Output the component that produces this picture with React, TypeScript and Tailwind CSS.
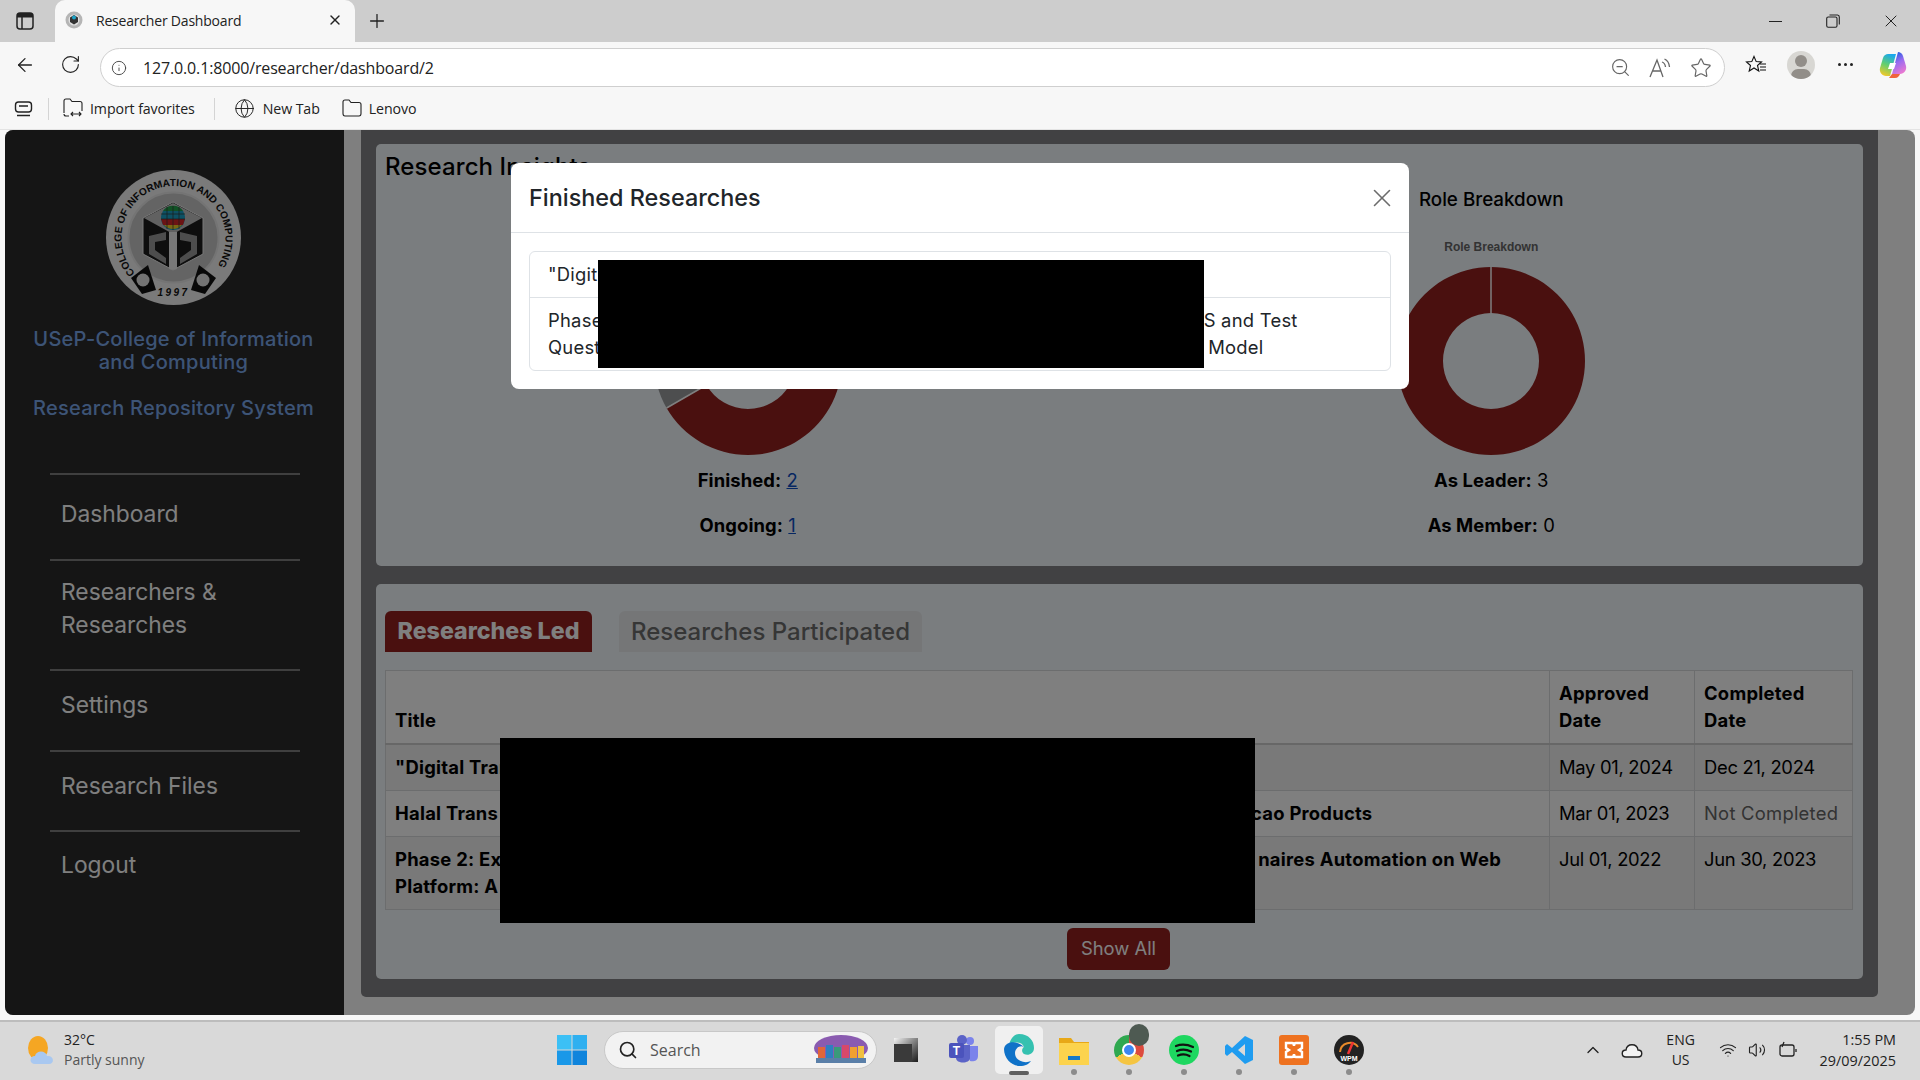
import React from "react";
import { ArrowLeft, ChevronUp, Globe, Info, Plus, RotateCw, Search, Star, Volume2, Wifi, X, ZoomOut } from "lucide-react";

const navItems = [
    { label: "Dashboard", box: "h-[86px] pb-[8px]" },
    { label: "Researchers & Researches", box: "h-[110px] pb-[14px]" },
    { label: "Settings", box: "h-[81px] pb-[12px]" },
    { label: "Research Files", box: "h-[80px] pb-[12px]" },
    { label: "Logout", box: "h-[66px]" },
];

const Seal = () => (
    <svg viewBox="0 0 135 135" className="w-[135px] h-[135px]">
        <defs>
            <path id="ring-top" d="M 29 103 A 52 52 0 1 1 106 103" />
        </defs>
        <circle cx="67.5" cy="67.5" r="67.5" fill="#f4f4f4" />
        <circle cx="67.5" cy="67.5" r="45" fill="#c9c9c9" stroke="#e8e8e8" strokeWidth="2" />
        <text fontSize="10.2" fontWeight="700" fill="#111" fontFamily="Liberation Sans, sans-serif">
            <textPath href="#ring-top" startOffset="0">COLLEGE OF INFORMATION AND COMPUTING</textPath>
        </text>
        <path d="M 25 108 L 42 95 L 50 120 L 36 124 Z" fill="#111" />
        <path d="M 110 108 L 93 95 L 85 120 L 99 124 Z" fill="#111" />
        <circle cx="37" cy="110" r="6.5" fill="#e6e6e6" />
        <circle cx="97" cy="110" r="6.5" fill="#e6e6e6" />
        <text x="67.5" y="126" textAnchor="middle" fontSize="10" fontWeight="700" fontStyle="italic" letterSpacing="2.5" fill="#111" fontFamily="Liberation Sans, sans-serif">1997</text>
        <path d="M 67 32 L 97 48 L 97 84 L 67 100 L 37 84 L 37 48 Z" fill="#1c1c1c" stroke="#f0f0f0" strokeWidth="1" />
        <path d="M 67 33 L 96 48 L 67 64 L 38 48 Z" fill="#c2c2c2" />
        <path d="M 43 66 L 60 62 L 60 70 L 49 72 L 49 80 L 60 88 L 60 94 L 43 84 Z" fill="#9b9b9b" />
        <path d="M 91 66 L 74 62 L 74 70 L 85 72 L 85 80 L 74 88 L 74 94 L 91 84 Z" fill="#9b9b9b" />
        <path d="M 63 62 L 71 62 L 71 99 L 67 100 L 63 99 Z" fill="#f0f0f0" />
        <circle cx="67" cy="48" r="12" fill="#1aa3c8" />
        <path d="M 57 41 A 12 12 0 0 1 77 41 Z" fill="#23a34a" />
        <path d="M 55 49 L 79 49 L 77 55 L 57 55 Z" fill="#d62828" />
        <path d="M 58 55 L 76 55 A 12 12 0 0 1 58 55 Z" fill="#f2d027" />
        <path d="M 55 44 H 79 M 55 49 H 79 M 67 36 V 60 M 61 37 V 59 M 73 37 V 59" stroke="#333" strokeWidth="0.7" />
    </svg>
);

const Sidebar = () => (
    <aside className="w-[339px] shrink-0 bg-[#2a2a2a] flex flex-col">
        <div className="pt-[40px] flex flex-col items-center">
            <div className="ml-[-2px]"><Seal /></div>
            <p className="mt-[23px] w-[300px] ml-[-2px] text-center text-[20px] leading-[23px] font-medium tracking-[0.25px] text-[#7aa8ec]">
                USeP-College of Information and Computing
            </p>
            <p className="mt-[23px] ml-[-2px] text-center text-[20px] leading-[23px] font-medium tracking-[0.25px] text-[#7aa8ec]">
                Research Repository System
            </p>
        </div>
        <nav className="mt-[53px] ml-[45px] w-[250px]">
            {navItems.map((item) => (
                <div
                    key={item.label}
                    className={`${item.box} border-t-2 border-[#7e7e7e] pl-[11px] pr-[20px] flex items-center text-[22.8px] leading-[33px] text-white`}
                >
                    {item.label}
                </div>
            ))}
        </nav>
    </aside>
);

// chart.js style donut: first arc from twelve o'clock, clockwise
const Donut = ({ split }: { split: number }) => {
    const R = 94;
    const r = 48;
    const a = (split / 360) * 2 * Math.PI;
    const x = (rad: number) => 100 + rad * Math.sin(a);
    const y = (rad: number) => 100 - rad * Math.cos(a);
    const large = split > 180 ? 1 : 0;
    return (
        <svg viewBox="0 0 200 200" className="w-[200px] h-[200px]">
            {split >= 360 ? (
                <>
                    <path
                        fillRule="evenodd"
                        d={`M 100 6 A ${R} ${R} 0 1 1 99.99 6 Z M 100 52 A ${r} ${r} 0 1 0 100.01 52 Z`}
                        fill="#94201e"
                    />
                    <line x1="100" y1="6" x2="100" y2="52" stroke="#fff" strokeWidth="1.5" />
                </>
            ) : (
                <>
                    <path
                        d={`M 100 6 A ${R} ${R} 0 ${large} 1 ${x(R)} ${y(R)} L ${x(r)} ${y(r)} A ${r} ${r} 0 ${large} 0 100 52 Z`}
                        fill="#94201e"
                    />
                    <path
                        d={`M ${x(R)} ${y(R)} A ${R} ${R} 0 ${1 - large} 1 100 6 L 100 52 A ${r} ${r} 0 ${1 - large} 0 ${x(r)} ${y(r)} Z`}
                        fill="#9a9c9e"
                    />
                    <line x1={x(R)} y1={y(R)} x2={x(r)} y2={y(r)} stroke="#fff" strokeWidth="1.5" />
                    <line x1="100" y1="6" x2="100" y2="52" stroke="#fff" strokeWidth="1.5" />
                </>
            )}
        </svg>
    );
};

const ChartBlock = ({ title, split, children }: { title: string; split: number; children: React.ReactNode }) => (
    <div className="flex-1 flex flex-col items-center">
        <h3 className="h-[30px] text-[18.8px] leading-[30px] font-medium text-black">{title}</h3>
        <div className="mt-[23px] h-[18px] text-[12px] leading-[18px] font-bold text-[#666] font-['Liberation_Sans',sans-serif]">{title}</div>
        <div className="mt-[5px]"><Donut split={split} /></div>
        <div className="mt-[6px] flex flex-col items-center gap-[18px] text-[18.4px] leading-[27px] tracking-[0.1px] text-black">{children}</div>
    </div>
);

const Insights = () => (
    <section className="h-[422px] bg-[#f4fafe] rounded-[5px] pt-[5px]">
        <h2 className="pl-[9px] text-[24px] leading-[36px] font-medium tracking-[0.1px] text-black">Research Insights</h2>
        <div className="flex">
            <ChartBlock title="" split={240}>
                <p><b className="font-bold">Finished:</b> <a className="underline text-[#0d4fc4]">2</a></p>
                <p><b className="font-bold">Ongoing:</b> <a className="underline text-[#0d4fc4]">1</a></p>
            </ChartBlock>
            <ChartBlock title="Role Breakdown" split={360}>
                <p><b className="font-bold">As Leader:</b> 3</p>
                <p><b className="font-bold">As Member:</b> 0</p>
            </ChartBlock>
        </div>
    </section>
);

const TableCard = () => (
    <section className="mt-[18px] h-[395px] bg-[#f4fafe] rounded-[5px] pt-[27px] px-[9px]">
        <div className="flex gap-[27px] h-[41px]">
            <div className="w-[207px] bg-[#94201e] rounded-t-[6px] flex items-center justify-center text-[23.2px] font-extrabold text-white">Researches Led</div>
            <div className="w-[303px] bg-[#eaecef] rounded-t-[6px] flex items-center justify-center text-[24px] font-medium text-[#6c6c6c]">Researches Participated</div>
        </div>
        <table className="mt-[18px] w-[1467px] table-fixed border-collapse text-[18.4px] leading-[27px] tracking-[0.25px] text-black">
            <colgroup>
                <col className="w-[1164px]" />
                <col className="w-[145px]" />
                <col className="w-[158px]" />
            </colgroup>
            <thead>
                <tr className="bg-white">
                    <th className="h-[73px] px-[9px] pb-[9px] border border-[#d8dadd] border-b-[2px] border-b-[#cfcfcf] text-left font-bold align-bottom">Title</th>
                    <th className="px-[9px] pb-[9px] border border-[#d8dadd] border-b-[2px] border-b-[#cfcfcf] text-left font-bold align-bottom">Approved Date</th>
                    <th className="px-[9px] pb-[9px] border border-[#d8dadd] border-b-[2px] border-b-[#cfcfcf] text-left font-bold align-bottom">Completed Date</th>
                </tr>
            </thead>
            <tbody>
                <tr className="bg-[#f2f2f2]">
                    <td className="h-[47px] px-[9px] border border-[#d8dadd] font-bold">"Digital Tran</td>
                    <td className="px-[9px] border border-[#d8dadd] tracking-[-0.3px]">May 01, 2024</td>
                    <td className="px-[9px] border border-[#d8dadd] tracking-[-0.3px]">Dec 21, 2024</td>
                </tr>
                <tr className="bg-white">
                    <td className="h-[46px] px-[9px] border border-[#d8dadd] font-bold">
                        Halal Trans<span className="inline-block w-[753px]" />cao Products
                    </td>
                    <td className="px-[9px] border border-[#d8dadd] tracking-[-0.3px]">Mar 01, 2023</td>
                    <td className="px-[9px] border border-[#d8dadd] text-[#666] whitespace-nowrap">Not Completed</td>
                </tr>
                <tr className="bg-[#f2f2f2]">
                    <td className="h-[73px] px-[9px] border border-[#d8dadd] font-bold align-top pt-[9px]">
                        Phase 2: Exp<span className="inline-block w-[745px]" />naires Automation on Web
                        <br />
                        Platform: A
                    </td>
                    <td className="px-[9px] border border-[#d8dadd] align-top pt-[9px] tracking-[-0.3px]">Jul 01, 2022</td>
                    <td className="px-[9px] border border-[#d8dadd] align-top pt-[9px] tracking-[-0.3px]">Jun 30, 2023</td>
                </tr>
            </tbody>
        </table>
        <div className="mt-[18px] flex justify-center">
            <button className="w-[103px] h-[42px] ml-[-2px] bg-[#94201e] rounded-[6px] text-[18.4px] text-white">Show All</button>
        </div>
    </section>
);

const Modal = () => (
    <div className="absolute inset-0 bg-black/50 flex justify-center items-start pt-[33px]">
        <div className="w-[898px] h-[226px] bg-white rounded-[8px]">
            <div className="h-[70px] border-b border-[#dee2e6] pl-[18px] pr-[12px] flex items-center justify-between">
                <h4 className="text-[23.4px] font-medium text-[#212529]">Finished Researches</h4>
                <X size={30} strokeWidth={1.3} className="text-[#6c6c6c]" />
            </div>
            <div className="p-[18px]">
                <ul className="border border-[#dee2e6] rounded-[6px] text-[18.4px] leading-[27px] tracking-[0.25px] text-[#212529]">
                    <li className="h-[45px] px-[18px] flex items-center">"Digital</li>
                    <li className="h-[73px] px-[18px] pt-[9px] border-t border-[#dee2e6]">
                        Phase<span className="inline-block w-[601px]" />S and Test
                        <br />
                        Quest<span className="inline-block w-[590px]" />T Model
                    </li>
                </ul>
            </div>
        </div>
    </div>
);

const TabBar = () => (
    <div className="h-[42px] bg-[#cdcdcd] flex items-end">
        <div className="w-[55px] h-full flex items-center justify-center">
            <svg width="18" height="18" viewBox="0 0 18 18" fill="none" className="ml-[-5px]">
                <rect x="1" y="1" width="16" height="16" rx="3" stroke="#222" strokeWidth="1.5" />
                <path d="M1 5.5 V4 a3 3 0 0 1 3 -3 h10 a3 3 0 0 1 3 3 v1.5 Z" fill="#222" />
                <path d="M6 5 V17" stroke="#222" strokeWidth="1.5" />
            </svg>
        </div>
        <div className="w-[300px] h-full bg-[#f7f7f7] rounded-t-[10px] flex items-center pl-[10px] pr-[12px] pb-[2px]">
            <svg width="18" height="18" viewBox="0 0 18 18">
                <circle cx="9" cy="9" r="8.5" fill="#b5b5b5" />
                <circle cx="9" cy="9" r="5.5" fill="#e0e0e0" />
                <path d="M9 4 L13 6.5 V11 L9 13.5 L5 11 V6.5 Z" fill="#333" />
                <circle cx="9" cy="6.5" r="2" fill="#1aa3c8" />
            </svg>
            <span className="ml-[13px] text-[14px] text-[#222] font-['Open_Sans',sans-serif] tracking-[-0.2px]">Researcher Dashboard</span>
            <X size={16} strokeWidth={2} className="ml-auto text-[#222]" />
        </div>
        <div className="w-[44px] h-full flex items-center justify-center"><Plus size={22} strokeWidth={1.4} className="text-[#222]" /></div>
        <div className="ml-auto h-full flex items-center text-[#222]">
            <div className="w-[58px] flex justify-center"><div className="w-[13px] h-px bg-[#222]" /></div>
            <div className="w-[58px] flex justify-center">
                <svg width="14" height="14" viewBox="0 0 14 14" fill="none" stroke="#222" strokeWidth="1.1">
                    <rect x="0.7" y="3" width="10.3" height="10.3" rx="1.5" />
                    <path d="M3.5 1 H11.5 A 2 2 0 0 1 13.3 3 V10.5" />
                </svg>
            </div>
            <div className="w-[58px] flex justify-center"><X size={20} strokeWidth={1.2} /></div>
        </div>
    </div>
);

const Toolbar = () => (
    <div className="h-[45px] bg-[#f7f7f7] flex items-center">
        <div className="w-[50px] flex justify-center"><ArrowLeft size={22} strokeWidth={1.4} className="text-[#222]" /></div>
        <div className="w-[50px] flex justify-center pr-[10px]"><RotateCw size={21} strokeWidth={1.3} className="text-[#222]" /></div>
        <div className="w-[1625px] h-[39px] mt-[6px] bg-white border border-[#cfcfcf] rounded-full flex items-center pl-[10px]">
            <Info size={16} strokeWidth={1.4} className="text-[#444]" />
            <span className="ml-[16px] text-[16px] text-[#222] font-['Open_Sans',sans-serif] tracking-[-0.15px]">127.0.0.1:8000/researcher/dashboard/2</span>
            <div className="ml-auto flex items-center gap-[18px] pr-[12px] text-[#666]">
                <ZoomOut size={21} strokeWidth={1.3} />
                <svg width="23" height="22" viewBox="0 0 23 22" fill="none" stroke="#666" strokeWidth="1.3">
                    <path d="M1 20 L8 3 L14 20 M3.5 14 H12" />
                    <path d="M13 5 Q16 6 16.5 10 M15.5 2 Q20 4 20.5 10" />
                </svg>
                <Star size={22} strokeWidth={1.3} />
            </div>
        </div>
        <div className="w-[45px] ml-[8px] flex justify-center">
            <svg width="22" height="20" viewBox="0 0 22 20" fill="none" stroke="#111" strokeWidth="1.1">
                <path d="M9 1.5 L11.2 6.6 L16.5 7 L12.5 10.5 L13.8 16 L9 13 L4.2 16 L5.5 10.5 L1.5 7 L6.8 6.6 Z" />
                <path d="M15 9 H21 M15 12 H21 M15 15 H21" />
            </svg>
        </div>
        <div className="w-[45px] flex justify-center">
            <div className="w-[28px] h-[28px] rounded-full bg-[#d8d7d3] relative overflow-hidden">
                <div className="absolute left-[8px] top-[4px] w-[12px] h-[12px] rounded-full bg-[#928e89]" />
                <div className="absolute left-[4px] top-[18px] w-[20px] h-[14px] rounded-full bg-[#928e89]" />
            </div>
        </div>
        <div className="w-[44px] flex justify-center gap-[3px]">
            <i className="w-[3px] h-[3px] rounded-full bg-[#222]" />
            <i className="w-[3px] h-[3px] rounded-full bg-[#222]" />
            <i className="w-[3px] h-[3px] rounded-full bg-[#222]" />
        </div>
        <div className="w-[50px] flex justify-center pl-[2px]">
            <svg width="28" height="28" viewBox="0 0 28 28">
                <defs>
                    <linearGradient id="cop-a" x1="0.6" y1="0" x2="0.3" y2="1">
                        <stop offset="0" stopColor="#19a8ee" />
                        <stop offset="0.5" stopColor="#62cf6e" />
                        <stop offset="1" stopColor="#f5c828" />
                    </linearGradient>
                    <linearGradient id="cop-b" x1="0.3" y1="0" x2="0.7" y2="1">
                        <stop offset="0" stopColor="#1f5fe0" />
                        <stop offset="0.45" stopColor="#9a6cf0" />
                        <stop offset="1" stopColor="#ee7ad0" />
                    </linearGradient>
                </defs>
                <path d="M9 3 H17 L11 25 H7 C3 25 0 21 1 17 L4 7 C5 4 7 3 9 3 Z" fill="url(#cop-a)" />
                <path d="M19 1 C21 1 23 2 24 5 L27 15 C28 19 25 23 21 23 H13 L19 1 Z" fill="url(#cop-b)" />
                <path d="M10 27 H16 C19 27 20 25 21 23 H13 Z" fill="#f0643c" />
                <path d="M11 12 H17 L15 18 H9 Z" fill="#fff" />
            </svg>
        </div>
    </div>
);

const Bookmarks = () => (
    <div className="h-[43px] bg-[#f7f7f7] border-b border-[#e4e4e4] flex items-center pt-[1px] text-[14.2px] text-[#222] font-['Open_Sans',sans-serif]">
        <div className="w-[48px] flex justify-center">
            <svg width="20" height="16" viewBox="0 0 20 16" fill="none" stroke="#222" strokeWidth="1.4">
                <rect x="1.5" y="1" width="16" height="10" rx="3" />
                <path d="M5 5 H14 M3 14.5 H16" />
            </svg>
        </div>
        <div className="w-px h-[22px] bg-[#d4d4d4]" />
        <div className="ml-[14px] flex items-center gap-[7px]">
            <svg width="20" height="20" viewBox="0 0 20 20" fill="none" stroke="#222" strokeWidth="1.1">
                <path d="M1 15 V3 Q1 1 3 1 H7 L9 3.5 H17 Q19 3.5 19 5.5 V13 M6 18 H3 Q1 18 1 16" />
                <path d="M8 16 H18 M10 14 L8 16 L10 18 M16 14 L18 16 L16 18" />
            </svg>
            <span className="tracking-[-0.1px]">Import favorites</span>
        </div>
        <div className="ml-[19px] w-px h-[22px] bg-[#d4d4d4]" />
        <div className="ml-[19px] flex items-center gap-[8px]">
            <Globe size={21} strokeWidth={1.1} />
            <span className="tracking-[-0.1px]">New Tab</span>
        </div>
        <div className="ml-[22px] flex items-center gap-[7px]">
            <svg width="20" height="18" viewBox="0 0 20 18" fill="none" stroke="#222" strokeWidth="1.1">
                <path d="M1 3 Q1 1 3 1 H7 L9 3.5 H17 Q19 3.5 19 5.5 V14.5 Q19 17 17 17 H3 Q1 17 1 14.5 Z" />
            </svg>
            <span className="tracking-[-0.1px]">Lenovo</span>
        </div>
    </div>
);

const Page = () => (
    <div className="mx-[5px] h-[885px] relative rounded-[8px] overflow-hidden bg-white flex">
        <Sidebar />
        <div className="flex-1 pl-[17px] pr-[37px]">
            <div className="h-[867px] bg-[#828286] rounded-b-[5px] pt-[14px] px-[15px]">
                <Insights />
                <TableCard />
            </div>
        </div>
        <Modal />
    </div>
);

const AppIcon = ({ children, dot = true, active = false }: { children: React.ReactNode; dot?: boolean; active?: boolean }) => (
    <div className={`relative w-[48px] h-[48px] mr-[7px] rounded-[5px] flex items-center justify-center ${active ? "bg-[#f0f0f0]" : ""}`}>
        {children}
        {dot && !active && <i className="absolute left-[21px] bottom-[-1px] w-[6px] h-[6px] rounded-full bg-[#8c8c8c]" />}
        {active && <i className="absolute left-[14px] bottom-[-1px] w-[20px] h-[4px] rounded-full bg-[#5f5f5f]" />}
    </div>
);

const Taskbar = () => (
    <div className="h-[60px] bg-[#d9d9d9] border-t-2 border-[#bdbdbd] flex items-center pb-[2px] relative text-[#222] font-['Open_Sans',sans-serif]">
        <div className="w-[557px] pl-[27px] flex items-center gap-[7px]">
            <svg width="30" height="32" viewBox="0 0 30 32">
                <ellipse cx="11" cy="14" rx="10" ry="12" fill="#f5a623" />
                <path d="M8 30 C2 30 2 22 8 22 C9 16 19 16 20 22 C27 21 28 30 22 30 Z" fill="#a9c8f0" />
            </svg>
            <div className="text-[14px] leading-[20px]">
                <div>32°C</div>
                <div className="text-[#555]">Partly sunny</div>
            </div>
        </div>
        <svg width="30" height="30" viewBox="0 0 30 30">
            <rect x="0" y="0" width="14.5" height="14.5" fill="#3cc0f5" />
            <rect x="15.5" y="0" width="14.5" height="14.5" fill="#2fb0f0" />
            <rect x="0" y="15.5" width="14.5" height="14.5" fill="#1a98e8" />
            <rect x="15.5" y="15.5" width="14.5" height="14.5" fill="#0f84dc" />
        </svg>
        <div className="ml-[17px] w-[273px] h-[38px] bg-[#f2f2f2] border border-[#c8c8c8] rounded-full flex items-center pl-[13px] pr-[6px]">
            <Search size={20} strokeWidth={2} className="text-[#222]" />
            <span className="ml-[12px] text-[16px] text-[#555]">Search</span>
            <svg width="58" height="30" viewBox="0 0 58 30" className="ml-auto">
                <ellipse cx="29" cy="13" rx="27" ry="13" fill="#8a5bb0" />
                <rect x="6" y="12" width="7" height="11" fill="#e0663a" />
                <rect x="14" y="10" width="7" height="13" fill="#2f7fc0" />
                <rect x="22" y="12" width="7" height="11" fill="#3a9a7a" />
                <rect x="30" y="10" width="7" height="13" fill="#d8486a" />
                <rect x="38" y="12" width="7" height="11" fill="#f0a030" />
                <rect x="46" y="11" width="6" height="12" fill="#f0c040" />
                <rect x="4" y="23" width="50" height="5" fill="#5a7fa8" />
            </svg>
        </div>
        <div className="ml-[17px] w-[24px] h-[24px] bg-gradient-to-br from-[#f6f6f6] to-[#1d1d1d] relative">
            <div className="absolute left-0 bottom-0 w-[18px] h-[18px] bg-[#3a3a3a]" />
        </div>
        <div className="ml-[22px] flex items-center">
            <AppIcon dot={false}>
                <svg width="32" height="32" viewBox="0 0 32 32">
                    <circle cx="22" cy="7" r="4" fill="#7b83eb" />
                    <path d="M17 12 H30 V22 C30 27 25 28 22 27 Z" fill="#7b83eb" />
                    <circle cx="14" cy="6" r="5" fill="#5b63c7" />
                    <path d="M8 11 H22 V24 C22 30 8 30 8 24 Z" fill="#5b63c7" />
                    <rect x="1" y="9" width="15" height="15" rx="2" fill="#4b53bc" />
                    <text x="8.5" y="21" textAnchor="middle" fontSize="12" fontWeight="700" fill="#fff" fontFamily="Liberation Sans, sans-serif">T</text>
                </svg>
            </AppIcon>
            <AppIcon active>
                <svg width="32" height="34" viewBox="0 0 32 34">
                    <path d="M16 1 C26 1 31 8 31 15 C31 21 25 23 21 21 C18 19 19 15 21 14 C19 8 8 8 5 15 C7 6 11 1 16 1 Z" fill="#35c1b0" />
                    <path d="M1 16 C1 26 9 33 17 33 C22 33 26 31 28 28 C22 31 12 28 12 20 C12 15 17 12 21 14 C14 7 2 8 1 16 Z" fill="#0f72c8" />
                </svg>
            </AppIcon>
            <AppIcon>
                <svg width="32" height="30" viewBox="0 0 32 30">
                    <path d="M1 3 H13 L16 7 H31 V12 H1 Z" fill="#e8a817" />
                    <rect x="1" y="8" width="30" height="22" fill="#fcd34d" />
                    <rect x="10" y="21" width="12" height="4" fill="#1479c8" />
                </svg>
            </AppIcon>
            <AppIcon>
                <div className="relative w-[30px] h-[30px] rounded-full bg-[conic-gradient(#dd4b3e_0deg_120deg,#f5c542_120deg_240deg,#2fa84f_240deg_360deg)]">
                    <div className="absolute left-[8px] top-[8px] w-[14px] h-[14px] rounded-full bg-[#3d86f0] border-2 border-white" />
                    <div className="absolute left-[15px] top-[-11px] w-[20px] h-[22px] rounded-full bg-[#4e5a52]" />
                </div>
            </AppIcon>
            <AppIcon>
                <svg width="30" height="30" viewBox="0 0 30 30" fill="none">
                    <circle cx="15" cy="15" r="15" fill="#1ed760" />
                    <path d="M7 11 Q15 8 24 12 M8 16 Q15 13 22 16.5 M9 20.5 Q15 18 20.5 21" stroke="#111" strokeWidth="2.2" strokeLinecap="round" />
                </svg>
            </AppIcon>
            <AppIcon>
                <svg width="30" height="30" viewBox="0 0 30 30">
                    <path d="M21 1 L29 5 V25 L21 29 L8 17 L3 21 L1 19 V11 L3 9 L8 13 Z M21 9 L14 15 L21 21 Z" fill="#1f9cf0" fillRule="evenodd" />
                </svg>
            </AppIcon>
            <AppIcon>
                <svg width="30" height="30" viewBox="0 0 30 30" fill="none">
                    <rect width="30" height="30" rx="3" fill="#ee7220" />
                    <path d="M7 8 H13 Q15 8 15 11 Q15 8 17 8 H23 V13 L20 15 L23 17 V22 H17 Q15 22 15 19 Q15 22 13 22 H7 V17 L10 15 L7 13 Z" stroke="#fff" strokeWidth="2.4" />
                </svg>
            </AppIcon>
            <AppIcon>
                <svg width="30" height="30" viewBox="0 0 30 30" fill="none">
                    <circle cx="15" cy="15" r="15" fill="#222" />
                    <path d="M6 17 A 10 10 0 0 1 24 12" stroke="#e88a2a" strokeWidth="2" />
                    <path d="M19 7 L14 19" stroke="#e33" strokeWidth="2.5" />
                    <text x="15" y="26" textAnchor="middle" fontSize="7" fontWeight="700" fill="#fff" fontFamily="Liberation Sans, sans-serif">WPM</text>
                </svg>
            </AppIcon>
        </div>
        <div className="ml-auto flex items-center pr-[24px]">
            <ChevronUp size={20} strokeWidth={1.6} className="mr-[18px]" />
            <svg width="22" height="18" viewBox="0 0 22 18" fill="#f2f2f2" stroke="#222" strokeWidth="1.4" className="mr-[18px]">
                <path d="M5 16 C0 16 0 9 5 9 C6 2 16 2 17 9 C22 9 22 16 17 16 Z" />
            </svg>
            <div className="w-[40px] text-center text-[14px] leading-[20px]">
                <div>ENG</div>
                <div>US</div>
            </div>
            <Wifi size={18} strokeWidth={1.6} className="ml-[18px]" />
            <Volume2 size={18} strokeWidth={1.5} className="ml-[11px]" />
            <svg width="20" height="18" viewBox="0 0 20 18" fill="none" stroke="#222" strokeWidth="1.3" className="ml-[12px]">
                <rect x="2" y="4" width="14" height="11" rx="2" />
                <path d="M18 8 V11 M6 1 L4 6" />
            </svg>
            <div className="ml-[22px] text-right text-[14.4px] leading-[21px]">
                <div>1:55 PM</div>
                <div>29/09/2025</div>
            </div>
        </div>
    </div>
);

export default function App() {
    return (
        <div className="relative w-[1920px] h-[1080px] overflow-hidden bg-[#f7f7f7] font-['Inter',sans-serif]">
            <TabBar />
            <Toolbar />
            <Bookmarks />
            <Page />
            <div className="h-[5px]" />
            <Taskbar />
            {/* redacted regions in the source capture */}
            <div className="absolute left-[598px] top-[260px] w-[606px] h-[108px] bg-black" />
            <div className="absolute left-[500px] top-[738px] w-[755px] h-[185px] bg-black" />
        </div>
    );
}
